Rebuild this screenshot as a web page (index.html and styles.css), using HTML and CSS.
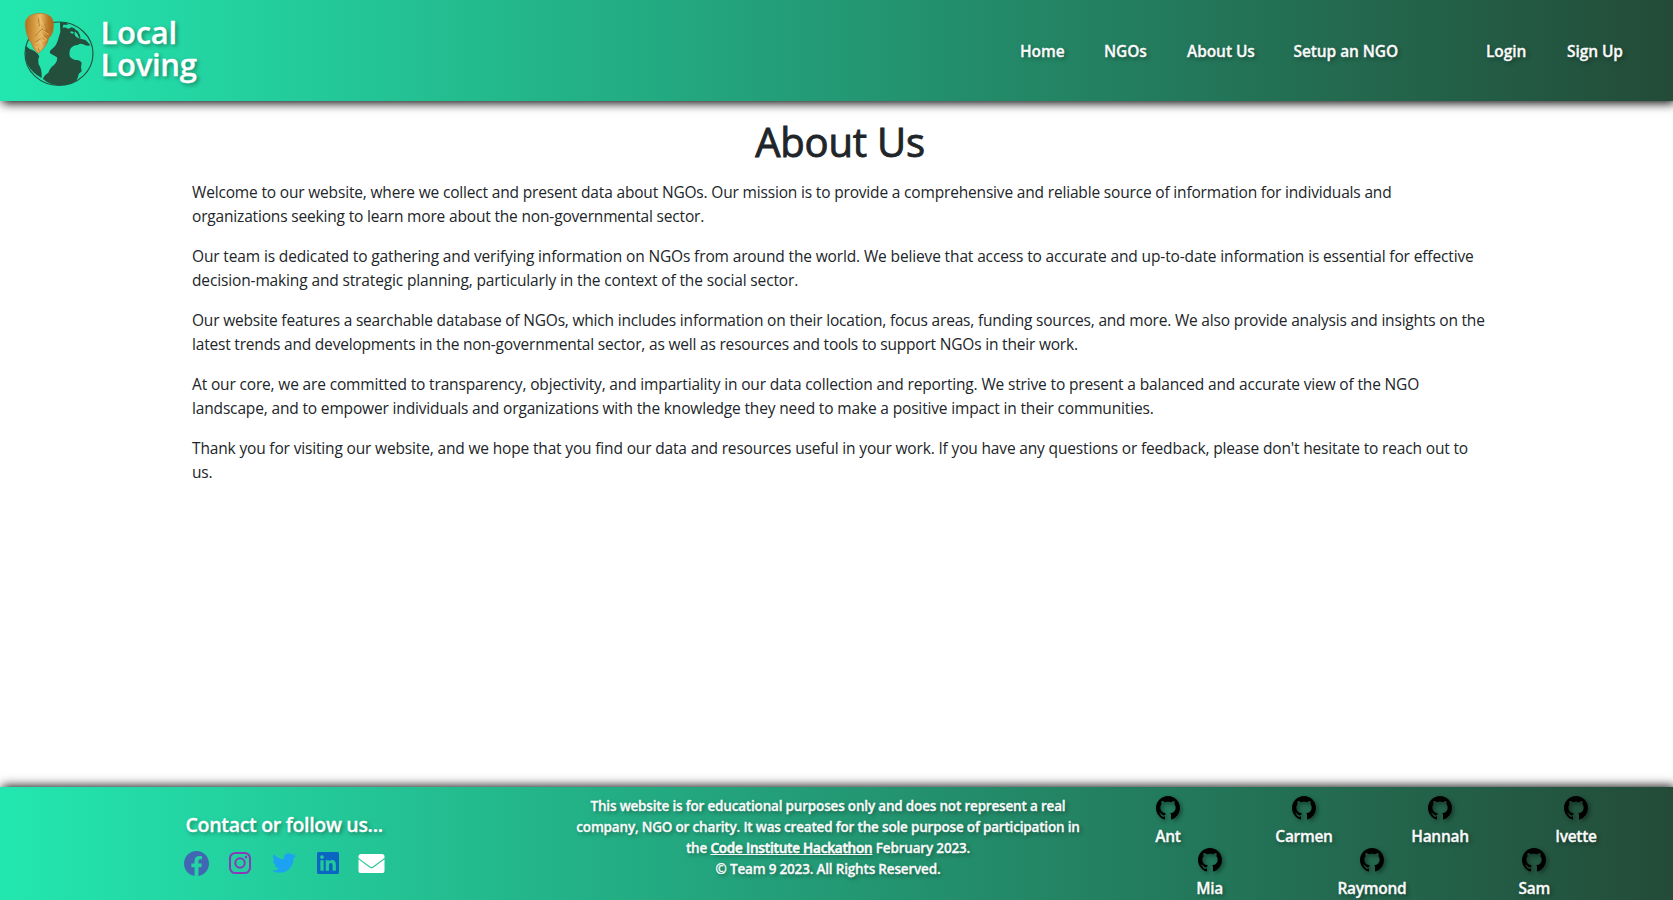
FILE: index.html
```html
<!DOCTYPE html>
<html lang="en">
<head>
<meta charset="utf-8">
<title>Local Loving - About Us</title>
<link rel="stylesheet" href="styles.css">
</head>
<body>
<svg width="0" height="0" class="sprite" aria-hidden="true">
  <symbol id="github" viewBox="0 0 16 16"><path d="M8 0C3.58 0 0 3.58 0 8c0 3.54 2.29 6.53 5.47 7.59.4.07.55-.17.55-.38 0-.19-.01-.82-.01-1.49-2.01.37-2.53-.49-2.69-.94-.09-.23-.48-.94-.82-1.13-.28-.15-.68-.52-.01-.53.63-.01 1.08.58 1.23.82.72 1.21 1.87.87 2.33.66.07-.52.28-.87.51-1.07-1.78-.2-3.64-.89-3.64-3.95 0-.87.31-1.59.82-2.15-.08-.2-.36-1.02.08-2.12 0 0 .67-.21 2.2.82.64-.18 1.32-.27 2-.27s1.36.09 2 .27c1.53-1.04 2.2-.82 2.2-.82.44 1.1.16 1.92.08 2.12.51.56.82 1.27.82 2.15 0 3.07-1.87 3.75-3.65 3.95.29.25.54.73.54 1.48 0 1.07-.01 1.93-.01 2.2 0 .21.15.46.55.38A8.01 8.01 0 0 0 16 8c0-4.42-3.58-8-8-8z"/></symbol>
</svg>
<header class="header">
  <a class="brand">
    <svg class="logo" viewBox="0 0 270 270" aria-hidden="true">
      <defs>
        <linearGradient id="gold" x1="0" y1="0" x2="1" y2="0">
          <stop offset="0" stop-color="#b0701f"/><stop offset=".4" stop-color="#dda64c"/><stop offset=".55" stop-color="#e4b864"/><stop offset=".8" stop-color="#bd7926"/><stop offset="1" stop-color="#a8641d"/>
        </linearGradient>
      </defs>
      <ellipse cx="129" cy="143" rx="102" ry="95" fill="none" stroke="#23533f" stroke-width="3.5"/>
      <path fill="#234f3c" d="M132 49Q150 47 156 54L148 64Q158 72 165 64Q180 66 178 76Q172 84 180 92L191 98Q187 84 176 75L170 70Q182 68 189 81Q195 92 193 98L208 102Q216 108 223 118Q212 121 201 115Q192 110 186 117Q170 117 163 129Q158 143 162 152Q170 162 184 162Q195 164 197 172Q193 182 197 196L188 204Q186 216 181 224Q158 239 129 238Q100 237 81 219Q83 208 97 200Q101 186 114 177Q126 165 123 154L102 142Q100 133 109 128Q122 118 127 98L133 78Z"/>
      <path fill="#234f3c" d="M30 120Q40 130 49 132Q64 139 70 151Q64 163 69 177Q78 188 77 216Q50 203 34 175Q25 150 30 120Z"/>
      <path fill="#24e0ab" d="M142 56l12 0-4 8-10 1zM164 76l10 2-3 5-8-2z"/>
      <path fill="url(#gold)" stroke="#b8732b" stroke-width="2" d="M28 56Q27 39 42 29Q56 22 72 22Q91 22 103 31Q115 42 112 65Q111 85 97 98Q94 118 78 131L68 142Q53 133 46 111Q30 92 28 56Z"/>
      <path fill="none" stroke="#f0ca7a" stroke-width="2" d="M70 28L76 50L62 56M76 48L90 65L63 85M80 72L98 86M76 86L92 101L60 112M68 100L80 122M58 122L72 128"/>
      <path fill="none" stroke="#a6661e" stroke-width="2" d="M67 38L70 60M86 54L94 79L78 69L58 90M84 88L92 94M74 98L58 108M67 125L70 136"/>
    </svg>
    <span class="brand-name">Local<br>Loving</span>
  </a>
  <nav class="nav">
    <a class="n-home">Home</a><a class="n-ngos">NGOs</a><a class="n-about">About Us</a><a class="n-setup">Setup an NGO</a><a class="n-login">Login</a><a class="n-sign">Sign Up</a>
  </nav>
</header>
<main class="main">
  <h1>About Us</h1>
  <p class="p1">Welcome to our website, where we collect and present data about NGOs. Our mission is to provide a comprehensive and reliable source of information for individuals and<br>organizations seeking to learn more about the non-governmental sector.</p>
  <p class="p2">Our team is dedicated to gathering and verifying information on NGOs from around the world. We believe that access to accurate and up-to-date information is essential for effective<br>decision-making and strategic planning, particularly in the context of the social sector.</p>
  <p class="p3">Our website features a searchable database of NGOs, which includes information on their location, focus areas, funding sources, and more. We also provide analysis and insights on the<br>latest trends and developments in the non-governmental sector, as well as resources and tools to support NGOs in their work.</p>
  <p class="p4">At our core, we are committed to transparency, objectivity, and impartiality in our data collection and reporting. We strive to present a balanced and accurate view of the NGO<br>landscape, and to empower individuals and organizations with the knowledge they need to make a positive impact in their communities.</p>
  <p class="p5">Thank you for visiting our website, and we hope that you find our data and resources useful in your work. If you have any questions or feedback, please don't hesitate to reach out to<br>us.</p>
</main>
<footer class="footer">
  <section class="contact">
    <h2>Contact or follow us...</h2>
    <div class="social">
      <svg class="fb" viewBox="0 0 16 16"><path fill="#4267b2" d="M16 8.049c0-4.446-3.582-8.05-8-8.05C3.58 0 0 3.603 0 8.05c0 4.017 2.926 7.347 6.75 7.951v-5.625H4.72V8.05h2.03V6.275c0-2.017 1.195-3.131 3.022-3.131.876 0 1.791.157 1.791.157v1.98h-1.009c-.993 0-1.303.621-1.303 1.258v1.51h2.218l-.354 2.326H9.25V16c3.824-.604 6.75-3.934 6.75-7.951"/></svg>
      <svg class="ig" viewBox="0 0 22 22" fill="none" stroke="#8a3ab9" stroke-width="2"><rect x="1" y="1" width="20" height="20" rx="5.3"/><circle cx="11" cy="11" r="4.7"/><circle cx="16.9" cy="5.1" r="1.3" fill="#8a3ab9" stroke="none"/></svg>
      <svg class="tw" viewBox="0 48 512 416"><path fill="#1da1f2" d="M459.37 151.716c.325 4.548.325 9.097.325 13.645 0 138.72-105.583 298.558-298.558 298.558-59.452 0-114.68-17.219-161.137-47.106 8.447.974 16.568 1.299 25.34 1.299 49.055 0 94.213-16.568 130.274-44.832-46.132-.975-84.792-31.188-98.112-72.772 6.498.974 12.995 1.624 19.818 1.624 9.421 0 18.843-1.3 27.614-3.573-48.081-9.747-84.143-51.98-84.143-102.985v-1.299c13.969 7.797 30.214 12.67 47.431 13.319-28.264-18.843-46.781-51.005-46.781-87.391 0-19.492 5.197-37.36 14.294-52.954 51.655 63.675 129.3 105.258 216.365 109.807-1.624-7.797-2.599-15.918-2.599-24.04 0-57.828 46.782-104.934 104.934-104.934 30.213 0 57.502 12.67 76.67 33.137 23.715-4.548 46.456-13.32 66.599-25.34-7.798 24.366-24.366 44.833-46.132 57.827 21.117-2.273 41.584-8.122 60.426-16.243-14.292 20.791-32.161 39.308-52.628 54.253z"/></svg>
      <svg class="li" viewBox="0 32 448 448"><path fill="#0a66c2" d="M416 32H31.9C14.3 32 0 46.5 0 64.3v383.4C0 465.5 14.3 480 31.9 480H416c17.6 0 32-14.5 32-32.3V64.3c0-17.8-14.4-32.3-32-32.3zM135.4 416H69V202.2h66.5V416zm-33.2-243c-21.3 0-38.5-17.3-38.5-38.5S80.9 96 102.2 96c21.2 0 38.5 17.3 38.5 38.5 0 21.3-17.2 38.5-38.5 38.5zm282.1 243h-66.4V312c0-24.8-.5-56.7-34.5-56.7-34.6 0-39.9 27-39.9 54.9V416h-66.4V202.2h63.7v29.2h.9c8.9-16.8 30.6-34.5 62.9-34.5 67.2 0 79.7 44.3 79.7 101.9V416z"/></svg>
      <svg class="em" viewBox="0 0 26 19"><path fill="#fff" d="M2.6 0h20.8A2.6 2.6 0 0 1 26 2.6v1.3l-11.6 8.7q-1.4 1-2.8 0L0 3.9V2.6A2.6 2.6 0 0 1 2.6 0zM0 5.2l11 8.3q2 1.3 4 0l11-8.3v11.2a2.6 2.6 0 0 1-2.6 2.6H2.6A2.6 2.6 0 0 1 0 16.400z"/></svg>
    </div>
  </section>
  <section class="legal">This website is for educational purposes only and does not represent a real<br>company, NGO or charity. It was created for the sole purpose of participation in<br>the <a>Code Institute Hackathon</a> February 2023.<br>© Team 9 2023. All Rights Reserved.</section>
  <section class="team">
    <div class="row four">
      <a><svg><use href="#github"/></svg>Ant</a><a><svg><use href="#github"/></svg>Carmen</a><a><svg><use href="#github"/></svg>Hannah</a><a><svg><use href="#github"/></svg>Ivette</a>
    </div>
    <div class="row three">
      <a><svg><use href="#github"/></svg>Mia</a><a><svg><use href="#github"/></svg>Raymond</a><a><svg><use href="#github"/></svg>Sam</a>
    </div>
  </section>
</footer>
</body>
</html>
```
FILE: styles.css
```css
* { box-sizing: border-box; }
body {
  margin: 0;
  height: 900px;
  overflow: hidden;
  display: flex;
  flex-direction: column;
  background: #fff;
  color: #212529;
  font: 400 15.5px/24px "Open Sans", "Noto Sans", sans-serif;
}
.sprite { position: absolute; }
.header, .footer {
  flex: none;
  display: flex;
  color: #fafafa;
  font-weight: 600;
  text-shadow: 2px 2px 4px rgba(0, 0, 0, .4);
  -webkit-text-stroke: .3px currentColor;
  background: linear-gradient(90deg, #23e7b0, #234b38);
}
.header {
  height: 101px;
  justify-content: space-between;
  box-shadow: 2px 2px 10px #000;
}
.brand { display: flex; padding: 6px 0 0 16px; }
.logo { width: 90px; height: 90px; }
.brand-name {
  margin: 10px 0 0 -5.5px;
  font-size: 31px;
  line-height: 32px;
  letter-spacing: -.3px;
  color: #fff;
}
.nav { display: flex; padding-top: 39px; letter-spacing: -.08px; white-space: nowrap; }
.n-home { width: 84px; }
.n-ngos { width: 83px; }
.n-about { width: 106.5px; }
.n-setup { width: 192.5px; }
.n-login { width: 81px; }
.n-sign { width: 106px; }

.main { flex: 1; padding: 17px 0 0 192px; white-space: nowrap; }
.main h1 {
  width: 1296px;
  margin: 0 0 14px;
  text-align: center;
  font-size: 40px;
  font-weight: 500;
  line-height: 48px;
  letter-spacing: -.2px;
  -webkit-text-stroke: .9px currentColor;
}
.main p { margin: 0 0 16px; }
.p1 { letter-spacing: -.172px; }
.p2 { letter-spacing: -.138px; }
.p3 { letter-spacing: -.192px; }
.p4 { letter-spacing: -.157px; }
.p5 { letter-spacing: -.159px; }

.footer { height: 113px; box-shadow: 2px -1px 10px rgba(0, 0, 0, .95); }
.contact { width: 568px; padding: 23px 0 0 184px; }
.contact h2 {
  margin: 0 0 9px 1.5px;
  font-size: 19.5px;
  font-weight: 600;
  line-height: 30px;
  letter-spacing: -.3px;
  color: #fff;
}
.social { display: flex; align-items: center; height: 28px; }
.fb { width: 25px; height: 25px; margin-right: 20px; }
.ig { width: 22px; height: 22px; margin-right: 20.500px; }
.tw { width: 24px; height: 20px; margin-right: 21.500px; }
.li { width: 22px; height: 22px; margin-right: 19px; }
.em { width: 27px; height: 19px; }
.legal {
  width: 520px;
  padding-top: 9px;
  text-align: center;
  font-size: 13.5px;
  line-height: 21px;
  letter-spacing: -.18px;
  white-space: nowrap;
}
.legal a { text-decoration: underline; }
.team { padding: 8.5px 0 0 12px; letter-spacing: -.3px; }
.row { display: flex; height: 52px; }
.row a {
  display: flex;
  flex-direction: column;
  align-items: center;
  line-height: 24px;
}
.row svg { width: 24px; height: 24px; margin-bottom: 4px; fill: #000; filter: drop-shadow(2px 2px 2px rgba(0, 0, 0, .4)); }
.four a { width: 136px; }
.three { padding-left: 28.5px; }
.three a { width: 162.300px; }
```
